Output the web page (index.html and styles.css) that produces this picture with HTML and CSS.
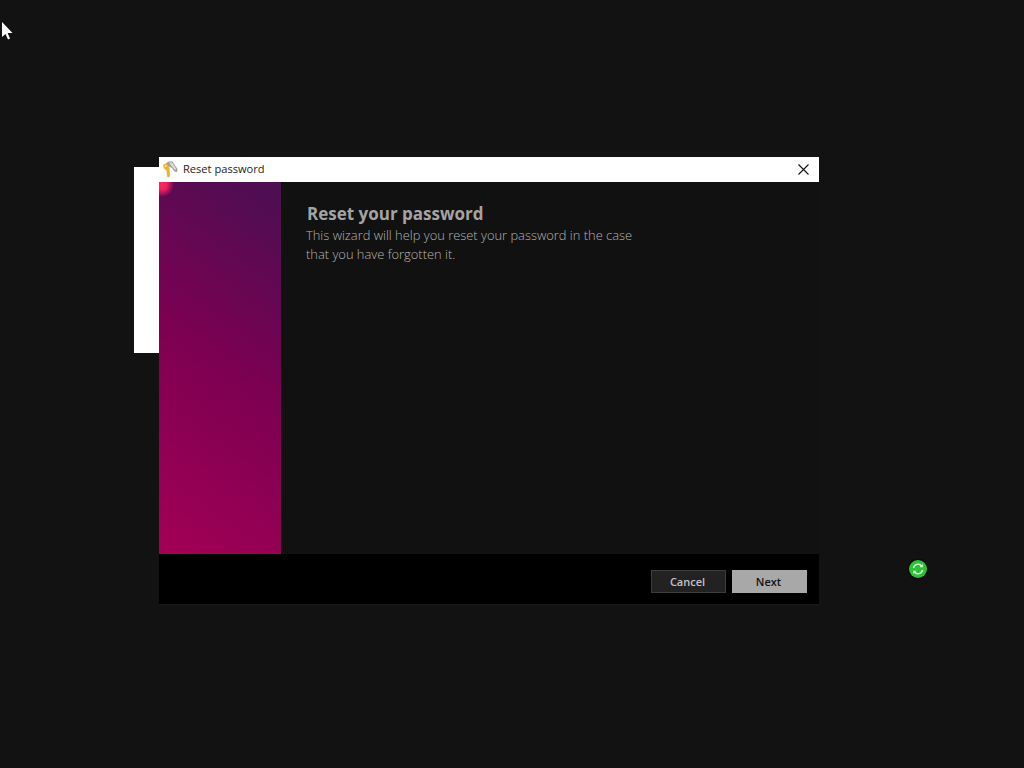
FILE: index.html
```html
<!DOCTYPE html>
<html lang="en">
<head>
    <meta charset="UTF-8">
    <meta name="viewport" content="width=device-width, initial-scale=1.0">
    <title>Reset password</title>
    <link rel="stylesheet" href="styles.css">
</head>
<body>
    <!-- Mouse pointer -->
    <svg class="pointer" width="14" height="20" viewBox="0 0 14 20">
        <path d="M2 2 L2 17 L5.5 14 L8 19.5 L10 18.5 L7.6 13 L12.5 13 Z" fill="#fff"/>
    </svg>

    <div class="back-window"></div>

    <div class="wizard">
        <div class="titlebar">
            <svg class="key-icon" width="16" height="17" viewBox="0 0 16 17">
                <path d="M4 2 L7 0.5 L10.5 0.5 L12 3 L15.5 8 L15 11 L12.5 10.5 L10 7 L6 5 Z" fill="#9c9c9c"/>
                <path d="M7 1.5 L10 1.5 L14.5 8 L13 9 L8.5 4 Z" fill="#dcdcdc"/>
                <path d="M1 4 L3.5 2.5 L6 3.5 L7.5 6.5 L8 15 L6.5 16.5 L5 15.5 L4.5 9.5 L2 7.5 Z" fill="#e9b52f"/>
                <circle cx="3.6" cy="5" r="1" fill="#fdeeb5"/>
            </svg>
            <span class="window-title">Reset password</span>
            <svg class="close-icon" width="11" height="11" viewBox="0 0 11 11">
                <path d="M0.5 0.5 L10.5 10.5 M10.5 0.5 L0.5 10.5" stroke="#111" stroke-width="1.1" fill="none"/>
            </svg>
        </div>

        <div class="wizard-body">
            <div class="side-panel"></div>
            <div class="content">
                <h1>Reset your password</h1>
                <p>This wizard will help you reset your password in the case<br>that you have forgotten it.</p>
            </div>
        </div>

        <div class="footer">
            <button class="btn btn-cancel">Cancel</button>
            <button class="btn btn-next">Next</button>
        </div>
    </div>

    <!-- Sync status icon -->
    <svg class="sync-icon" width="24" height="24" viewBox="0 0 24 24">
        <circle cx="12" cy="12" r="10.5" fill="#0a0a0a"/>
        <circle cx="12" cy="12" r="9" fill="#2cc234"/>
        <path d="M7.5 11 A4.6 4.6 0 0 1 15.6 9" stroke="#d6f7d6" stroke-width="1.4" fill="none"/>
        <path d="M16.5 13 A4.6 4.6 0 0 1 8.4 15" stroke="#d6f7d6" stroke-width="1.4" fill="none"/>
        <path d="M16.8 6.8 L16.8 10.2 L13.6 10.2 Z" fill="#d6f7d6"/>
        <path d="M7.2 17.2 L7.2 13.8 L10.4 13.8 Z" fill="#d6f7d6"/>
    </svg>
</body>
</html>
```

FILE: styles.css
```css
/* Basic Reset */
* {
    margin: 0;
    padding: 0;
    box-sizing: border-box;
}

/* Desktop */
body {
    font-family: 'Open Sans', 'Liberation Sans', sans-serif;
    background: #121212;
    width: 1024px;
    height: 768px;
    overflow: hidden;
    position: relative;
}

.pointer {
    position: absolute;
    left: 0;
    top: 20px;
}

.back-window {
    position: absolute;
    left: 134px;
    top: 167px;
    width: 25px;
    height: 186px;
    background: #fff;
}

.sync-icon {
    position: absolute;
    left: 906px;
    top: 557px;
}

/* Wizard window */
.wizard {
    position: absolute;
    left: 159px;
    top: 157px;
    width: 660px;
    height: 448px;
    display: flex;
    flex-direction: column;
    background: #111;
}

.titlebar {
    height: 25px;
    background: #fff;
    display: flex;
    align-items: center;
    padding: 0 10px 2px 3px;
}

.key-icon {
    margin-right: 5px;
    margin-top: 2px;
}

.window-title {
    flex: 1;
    font-family: 'Open Sans', sans-serif;
    font-size: 11.1px;
    color: #222;
}

.close-icon {
    margin-top: 2px;
}

.wizard-body {
    flex: 1;
    display: flex;
}

.side-panel {
    width: 123px;
    background:
        radial-gradient(circle at 3px 3px, #ff2a62 0, #f02060 5px, rgba(224, 28, 88, 0) 12px),
        linear-gradient(36deg, #a30055 0%, #7c0052 52%, #4a1052 100%);
    border-right: 1px solid #0b0b0b;
}

.content {
    flex: 1;
    padding: 21px 24px;
}

h1 {
    font-size: 17px;
    line-height: 22px;
    font-weight: 700;
    color: #a4a4a4;
    margin-left: 1px;
}

p {
    font-size: 12.9px;
    line-height: 19px;
    font-weight: 300;
    color: #b4b4b4;
    padding-top: 1px;
}

.footer {
    height: 51px;
    background: #000;
    display: flex;
    justify-content: flex-end;
    align-items: flex-start;
    gap: 6px;
    padding: 16px 12px 0 0;
    border-bottom: 1px solid #1a1a1a;
}

.btn {
    width: 75px;
    height: 23px;
    font-family: 'Open Sans', sans-serif;
    font-size: 11px;
    font-weight: 600;
    padding-right: 2px;
}

.btn-cancel {
    background: #222;
    color: #c4c4c4;
    border: 1px solid #3c3c3c;
}

.btn-next {
    background: #a8a8a8;
    color: #111;
    border: none;
}
```
